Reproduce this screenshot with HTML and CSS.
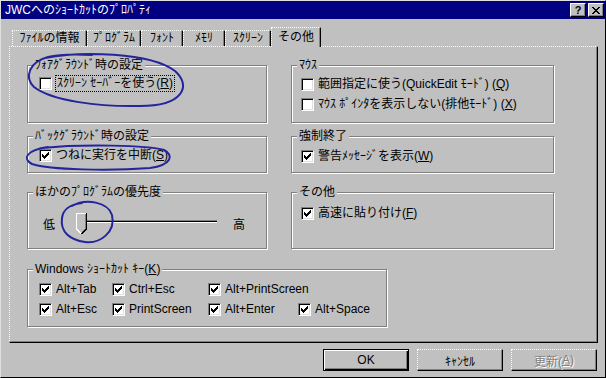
FILE: index.html
```html
<!DOCTYPE html>
<html lang="ja">
<head>
  <meta charset="UTF-8">
  <title>JWCへのｼｮｰﾄｶｯﾄのﾌﾟﾛﾊﾟﾃｨ</title>
  <link rel="stylesheet" href="styles.css">
</head>
<body>
<div class="window">
  <div class="titlebar">
    <span class="title">JWCへのｼｮｰﾄｶｯﾄのﾌﾟﾛﾊﾟﾃｨ</span>
    <div class="caption-btns">
      <span class="cap-btn help">?</span>
      <span class="cap-btn">
        <svg width="8" height="7" viewBox="0 0 8 7"><path d="M0 0h2v1H0zM6 0h2v1H6zM1 1h2v1H1zM5 1h2v1H5zM2 2h4v1H2zM3 3h2v1H3zM2 4h4v1H2zM1 5h2v1H1zM5 5h2v1H5zM0 6h2v1H0zM6 6h2v1H6z" fill="#000"/></svg>
      </span>
    </div>
  </div>

  <div class="tabs">
    <span class="tab tab-file">ﾌｧｲﾙの情報</span>
    <span class="tab tab-prog">ﾌﾟﾛｸﾞﾗﾑ</span>
    <span class="tab tab-font">ﾌｫﾝﾄ</span>
    <span class="tab tab-mem">ﾒﾓﾘ</span>
    <span class="tab tab-screen">ｽｸﾘｰﾝ</span>
    <span class="tab active">その他</span>
  </div>

  <div class="panel">
    <div class="groups">
      <div class="group row1 fore">
        <span class="group-title">ﾌｫｱｸﾞﾗｳﾝﾄﾞ時の設定</span>
        <div class="opt"><span class="cb"></span><span class="focus">ｽｸﾘｰﾝ ｾｰﾊﾞｰを使う(<u>R</u>)</span></div>
      </div>

      <div class="group row1 mouse">
        <span class="group-title">ﾏｳｽ</span>
        <div class="opts">
          <div class="opt"><span class="cb"></span><span>範囲指定に使う(QuickEdit ﾓｰﾄﾞ) (<u>Q</u>)</span></div>
          <div class="opt"><span class="cb"></span><span>ﾏｳｽ ﾎﾟｲﾝﾀを表示しない(排他ﾓｰﾄﾞ) (<u>X</u>)</span></div>
        </div>
      </div>

      <div class="group row2 back">
        <span class="group-title">ﾊﾞｯｸｸﾞﾗｳﾝﾄﾞ時の設定</span>
        <div class="opt"><span class="cb on"></span><span>つねに実行を中断(<u>S</u>)</span></div>
      </div>

      <div class="group row2 force">
        <span class="group-title">強制終了</span>
        <div class="opt"><span class="cb on"></span><span>警告ﾒｯｾｰｼﾞを表示(<u>W</u>)</span></div>
      </div>

      <div class="group row3 priority">
        <span class="group-title">ほかのﾌﾟﾛｸﾞﾗﾑの優先度</span>
        <div class="slider">
          <span>低</span>
          <div class="slider-track">
            <div class="slider-line"></div>
            <svg class="slider-thumb" width="11" height="21" viewBox="0 0 11 21" shape-rendering="crispEdges">
              <polygon points="0,0 11,0 11,16 5.5,21 0,16" fill="#c0c0c0"/>
              <polyline points="0.5,16 0.5,0.5 10,0.5" fill="none" stroke="#fff"/>
              <polyline points="0.5,16 5,20.5" fill="none" stroke="#fff"/>
              <polyline points="9.5,1 9.5,15.5 5.5,19.5" fill="none" stroke="#808080"/>
              <polyline points="10.5,0 10.5,16 5.5,21" fill="none" stroke="#000"/>
            </svg>
          </div>
          <span>高</span>
        </div>
      </div>

      <div class="group row3 other">
        <span class="group-title">その他</span>
        <div class="opt"><span class="cb on"></span><span>高速に貼り付け(<u>F</u>)</span></div>
      </div>

      <div class="group row4 keys">
        <span class="group-title">Windows ｼｮｰﾄｶｯﾄ ｷｰ(<u>K</u>)</span>
        <div class="keys-grid">
          <div class="opt"><span class="cb on"></span><span>Alt+Tab</span></div>
          <div class="opt"><span class="cb on"></span><span>Ctrl+Esc</span></div>
          <div class="opt"><span class="cb on"></span><span>Alt+PrintScreen</span></div>
          <div class="opt newrow"><span class="cb on"></span><span>Alt+Esc</span></div>
          <div class="opt"><span class="cb on"></span><span>PrintScreen</span></div>
          <div class="opt"><span class="cb on"></span><span>Alt+Enter</span></div>
          <div class="opt"><span class="cb on"></span><span>Alt+Space</span></div>
        </div>
      </div>
    </div>
  </div>

  <div class="buttons">
    <span class="btn default">OK</span>
    <span class="btn">ｷｬﾝｾﾙ</span>
    <span class="btn disabled">更新(<u>A</u>)</span>
  </div>

  <!-- hand drawn marks on top of the dialog -->
  <svg class="marks" width="606" height="378" viewBox="0 0 606 378">
    <g fill="none" stroke="#24249c" stroke-width="2" stroke-linecap="round">
      <path d="M45 58 C80 51, 150 52, 175 71 C192 86, 183 106, 140 106 C100 107, 52 101, 34 87 C24 77, 29 62, 48 57 C60 54, 75 54, 92 55"/>
      <path d="M42 148 C80 144, 148 145, 164 150 C174 155, 172 165, 150 168 C110 171, 50 170, 32 164 C22 159, 26 150, 48 147"/>
      <path d="M72 206 C86 198, 108 202, 112 215 C116 232, 100 244, 85 242 C70 240, 60 232, 62 218 C63 210, 68 205, 82 203"/>
    </g>
  </svg>
</div>
</body>
</html>
```

FILE: styles.css
```css
body {
  margin: 0;
  font-family: "Liberation Sans", "Noto Sans CJK JP", sans-serif;
  font-size: 12px;
  color: #000;
  background: #c0c0c0;
}
.window {
  position: relative;
  width: 606px;
  height: 378px;
  box-sizing: border-box;
  border: 1px solid;
  border-color: #dfdfdf #000 #000 #dfdfdf;
  background: #c0c0c0;
}
.titlebar {
  height: 18px;
  background: #000080;
  color: #fff;
  display: flex;
  align-items: center;
  justify-content: space-between;
  padding-left: 4px;
}
.title {
  line-height: 18px;
  white-space: nowrap;
}
.caption-btns {
  display: flex;
  gap: 2px;
  margin-right: 1px;
}
.cap-btn {
  box-sizing: border-box;
  width: 16px;
  height: 14px;
  display: flex;
  align-items: center;
  justify-content: center;
  background: #c0c0c0;
  border-top: 1px solid #fff;
  border-left: 1px solid #fff;
  border-right: 1px solid #000;
  border-bottom: 1px solid #000;
  box-shadow: inset -1px -1px #808080;
  color: #000;
}
.help {
  font-weight: bold;
  font-size: 11px;
  line-height: 12px;
}

/* tabs */
.tabs {
  display: flex;
  align-items: flex-end;
  height: 20px;
  margin-top: 8px;
  padding-left: 11px;
}
.tab {
  box-sizing: border-box;
  height: 16px;
  margin-bottom: 1px;
  border-top: 1px dotted #fff;
  border-left: 1px dotted #fff;
  border-right: 1px solid #000;
  box-shadow: inset -1px 0 #808080;
  text-align: center;
  line-height: 14px;
  white-space: nowrap;
}
.tab-file { width: 75px; }
.tab-prog { width: 54px; }
.tab-font { width: 42px; }
.tab-mem { width: 42px; }
.tab-screen { width: 46px; }
.tab.active {
  position: relative;
  width: 50px;
  height: 20px;
  margin-bottom: 0;
  background: #c0c0c0;
  line-height: 18px;
}

/* panel */
.panel {
  box-sizing: border-box;
  width: 589px;
  height: 297px;
  margin: -1px 0 0 8px;
  border-top: 1px dotted #fff;
  border-left: 1px dotted #fff;
  border-right: 1px solid #000;
  border-bottom: 1px solid #000;
  box-shadow: inset -1px -1px #808080;
  padding: 18px 0 0 17px;
}
.groups {
  display: grid;
  grid-template-columns: 240px 263px;
  column-gap: 24px;
  align-items: start;
}
.group {
  position: relative;
  box-sizing: border-box;
  border: 1px solid #808080;
  box-shadow: inset 1px 1px #fff, 1px 1px #fff;
}
.group-title {
  position: absolute;
  top: -8px;
  left: 5px;
  padding: 0 2px;
  background: #c0c0c0;
  line-height: 14px;
  white-space: nowrap;
}
.row1 { height: 58px; }
.row2 { height: 37px; margin-top: 13px; }
.row3 { height: 57px; margin-top: 19px; }
.row4 {
  grid-column: 1 / 3;
  width: 360px;
  height: 58px;
  margin-top: 20px;
}
.fore { padding: 11px 0 0 11px; }
.back { padding: 12px 0 0 11px; }
.mouse { padding: 12px 0 0 9px; }
.force { padding: 13px 0 0 9px; }
.other { padding: 14px 0 0 9px; }
.keys { padding: 13px 0 0 11px; }
.priority { padding: 20px 0 0 15px; }

/* checkboxes */
.opts {
  display: flex;
  flex-direction: column;
  gap: 7px;
}
.opt {
  display: flex;
  align-items: center;
  gap: 4px;
  height: 13px;
  line-height: 13px;
  white-space: nowrap;
}
.cb {
  position: relative;
  flex: none;
  box-sizing: border-box;
  width: 13px;
  height: 13px;
  background: #fff;
  border-top: 1px solid #808080;
  border-left: 1px solid #808080;
  border-right: 1px solid #fff;
  border-bottom: 1px solid #fff;
  box-shadow: inset 1px 1px #000, inset -1px -1px #dfdfdf;
}
.cb.on::after {
  content: "";
  position: absolute;
  left: 2px;
  top: 2px;
  width: 1px;
  height: 1px;
  box-shadow: 6px 0 #000, 5px 1px #000, 6px 1px #000,
    0 2px #000, 4px 2px #000, 5px 2px #000, 6px 2px #000,
    0 3px #000, 1px 3px #000, 3px 3px #000, 4px 3px #000, 5px 3px #000,
    0 4px #000, 1px 4px #000, 2px 4px #000, 3px 4px #000, 4px 4px #000,
    1px 5px #000, 2px 5px #000, 3px 5px #000, 2px 6px #000;
}
.focus {
  margin-left: -1px;
  padding: 0 1px;
  border: 1px dotted #000;
  line-height: 15px;
}
.keys-grid {
  display: grid;
  grid-template-columns: 73px 96px 90px auto;
  row-gap: 7px;
}
.keys-grid .newrow {
  grid-column: 1;
}

/* slider */
.slider {
  display: flex;
  align-items: center;
  height: 21px;
}
.slider-track {
  position: relative;
  width: 141px;
  height: 21px;
  margin: 0 16px 0 21px;
}
.slider-line {
  position: absolute;
  left: 4px;
  right: 0;
  top: 7px;
  height: 1px;
  background: #000;
  border-top: 1px solid #808080;
  border-bottom: 1px solid #fff;
}
.slider-thumb {
  position: absolute;
  left: 0;
  top: 0;
}

/* buttons */
.buttons {
  display: flex;
  justify-content: flex-end;
  gap: 8px;
  margin-top: 6px;
  padding-right: 8px;
}
.btn {
  box-sizing: border-box;
  width: 86px;
  height: 22px;
  display: flex;
  align-items: center;
  justify-content: center;
  border-top: 1px dotted #fff;
  border-left: 1px dotted #fff;
  border-right: 1px solid #000;
  border-bottom: 1px solid #000;
  box-shadow: inset -1px -1px #808080;
  white-space: nowrap;
}
.btn.default {
  border: 1px solid #000;
  box-shadow: inset 1px 1px #fff, inset -1px -1px #000, inset -2px -2px #808080;
}
.btn.disabled {
  color: #808080;
  text-shadow: 1px 1px #fff;
}
.marks {
  position: absolute;
  left: -1px;
  top: -1px;
  pointer-events: none;
}
```
